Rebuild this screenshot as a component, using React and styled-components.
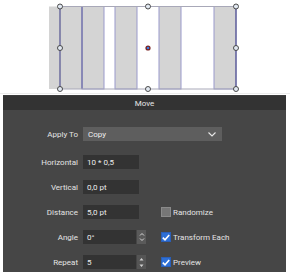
import React from 'react'
import styled, { createGlobalStyle } from 'styled-components'

const Global = createGlobalStyle`
  html, body { margin:0; padding:0; background:#ffffff; }
  body { font-family:Roboto,"Open Sans",sans-serif; }
`;

const Page = styled.div`
  width:290px;
  height:272px;
  overflow:hidden;
  display:flex;
  flex-direction:column;
`;

const Canvas = styled.svg`
  display:block;
  width:290px;
  height:95px;
  flex:none;
`;

const Panel = styled.div`
  margin:0 4px 0 3px;
  flex:1;
  background:#464646;
  display:flex;
  flex-direction:column;
`;

const Header = styled.div`
  height:14px;
  background:#333333;
  border-top:1px solid #3c3c3c;
  color:#e6e6e6;
  font-size:8px;
  display:flex;
  align-items:center;
  justify-content:center;
`;

const Form = styled.div`
  display:flex;
  flex-direction:column;
  gap:11px;
  padding-top:17px;
`;

const Row = styled.div`
  display:flex;
  align-items:center;
  height:14px;
  margin-bottom:${({ $extra }) => $extra || 0}px;
`;

const Label = styled.div`
  width:75px;
  margin-right:5px;
  text-align:right;
  color:#e4e4e4;
  font-size:8px;
`;

const Select = styled.div`
  width:139px;
  height:14px;
  background:#5e5e5e;
  color:#f0f0f0;
  font-size:8px;
  display:flex;
  align-items:center;
  justify-content:space-between;
  padding:0 6px 0 5px;
  box-sizing:border-box;
`;

const FieldGroup = styled.div`
  width:63px;
  display:flex;
  gap:1px;
  margin-right:15px;
`;

const Field = styled.div`
  width:${({ $w }) => $w || 56}px;
  height:14px;
  background:#333333;
  color:#ececec;
  font-size:8px;
  display:flex;
  align-items:center;
  padding-left:4px;
  box-sizing:border-box;
`;

const Spin = styled.div`
  width:9px;
  height:14px;
  background:${({ $light }) => ($light ? '#555555' : '#5a5a5a')};
  display:flex;
  align-items:center;
  justify-content:center;
`;

const Check = styled.div`
  width:10px;
  height:10px;
  box-sizing:border-box;
  background:${({ $on }) => ($on ? '#2d6fd6' : '#767676')};
  border:1px solid ${({ $on }) => ($on ? '#2a5fb8' : '#8a8a8a')};
  display:flex;
  align-items:center;
  justify-content:center;
  margin-right:2px;
`;

const CheckText = styled.div`
  color:#e4e4e4;
  font-size:8px;
`;

const Chevron = () => (
  <svg width="8" height="5" viewBox="0 0 8 5">
    <path d="M0.5 0.5 L4 4 L7.5 0.5" fill="none" stroke="#e8e8e8" strokeWidth="1.1" />
  </svg>
);

const Tick = () => (
  <svg width="8" height="7" viewBox="0 0 8 7">
    <path d="M0.8 3.6 L3 5.8 L7.2 1" fill="none" stroke="#ffffff" strokeWidth="1.6" />
  </svg>
);

const UpDown = () => (
  <svg width="6" height="10" viewBox="0 0 6 10">
    <path d="M1 3.5 L3 1.5 L5 3.5 M1 6.5 L3 8.5 L5 6.5" fill="none" stroke="#d8d8d8" strokeWidth="1" />
  </svg>
);

const Arrows = () => (
  <svg width="5" height="11" viewBox="0 0 5 11">
    <path d="M2.5 1 L4.5 3.5 L0.5 3.5 Z M2.5 10 L4.5 7.5 L0.5 7.5 Z" fill="#d0d0d0" />
  </svg>
);

const stripes = [
  [82, 104],
  [115, 137],
  [159, 181],
  [214, 236],
];

const handles = [
  [60, 6.5], [148, 6.5], [236, 6.5],
  [60, 48], [236, 48],
  [60, 89], [148, 89], [236, 89],
];

const Drawing = () => (
  <Canvas viewBox="0 0 290 95">
    <rect x="0" y="0" width="290" height="95" fill="#ffffff" />
    <line x1="0" y1="93.5" x2="290" y2="93.5" stroke="#ececec" />
    <rect x="49" y="6.5" width="33" height="82.5" fill="#d4d4d4" />
    {stripes.map(([a, b]) => (
      <rect key={a} x={a} y="6.5" width={b - a} height="82.5" fill="#d4d4d4" stroke="#9a9acb" strokeWidth="1" />
    ))}
    <line x1="82" y1="6.5" x2="82" y2="89" stroke="#5b5b9c" />
    <line x1="60" y1="6.5" x2="236" y2="6.5" stroke="#a8a8b8" />
    <line x1="60" y1="89" x2="236" y2="89" stroke="#a8a8b8" />
    <line x1="60" y1="6.5" x2="60" y2="89" stroke="#53538f" strokeWidth="1.2" />
    <line x1="236" y1="6.5" x2="236" y2="89" stroke="#53538f" strokeWidth="1.2" />
    {handles.map(([x, y]) => (
      <circle key={`${x}-${y}`} cx={x} cy={y} r="2.5" fill="#e2e9f2" stroke="#3a3a3a" strokeWidth="0.9" />
    ))}
    <circle cx="148" cy="48" r="2.6" fill="#7a2222" />
    <circle cx="148" cy="48" r="1.3" fill="#3b7de0" />
  </Canvas>
);

export default function App() {
  return (
    <Page>
      <Global />
      <Drawing />
      <Panel>
        <Header>Move</Header>
        <Form>
          <Row $extra={3}>
            <Label>Apply To</Label>
            <Select>
              <span>Copy</span>
              <Chevron />
            </Select>
          </Row>
          <Row>
            <Label>Horizontal</Label>
            <FieldGroup>
              <Field>10 * 0,5</Field>
            </FieldGroup>
          </Row>
          <Row>
            <Label>Vertical</Label>
            <FieldGroup>
              <Field>0,0 pt</Field>
            </FieldGroup>
          </Row>
          <Row>
            <Label>Distance</Label>
            <FieldGroup>
              <Field>5,0 pt</Field>
            </FieldGroup>
            <Check />
            <CheckText>Randomize</CheckText>
          </Row>
          <Row>
            <Label>Angle</Label>
            <FieldGroup>
              <Field $w={53}>0°</Field>
              <Spin><UpDown /></Spin>
            </FieldGroup>
            <Check $on><Tick /></Check>
            <CheckText>Transform Each</CheckText>
          </Row>
          <Row>
            <Label>Repeat</Label>
            <FieldGroup>
              <Field $w={53}>5</Field>
              <Spin $light><Arrows /></Spin>
            </FieldGroup>
            <Check $on><Tick /></Check>
            <CheckText>Preview</CheckText>
          </Row>
        </Form>
      </Panel>
    </Page>
  );
}
